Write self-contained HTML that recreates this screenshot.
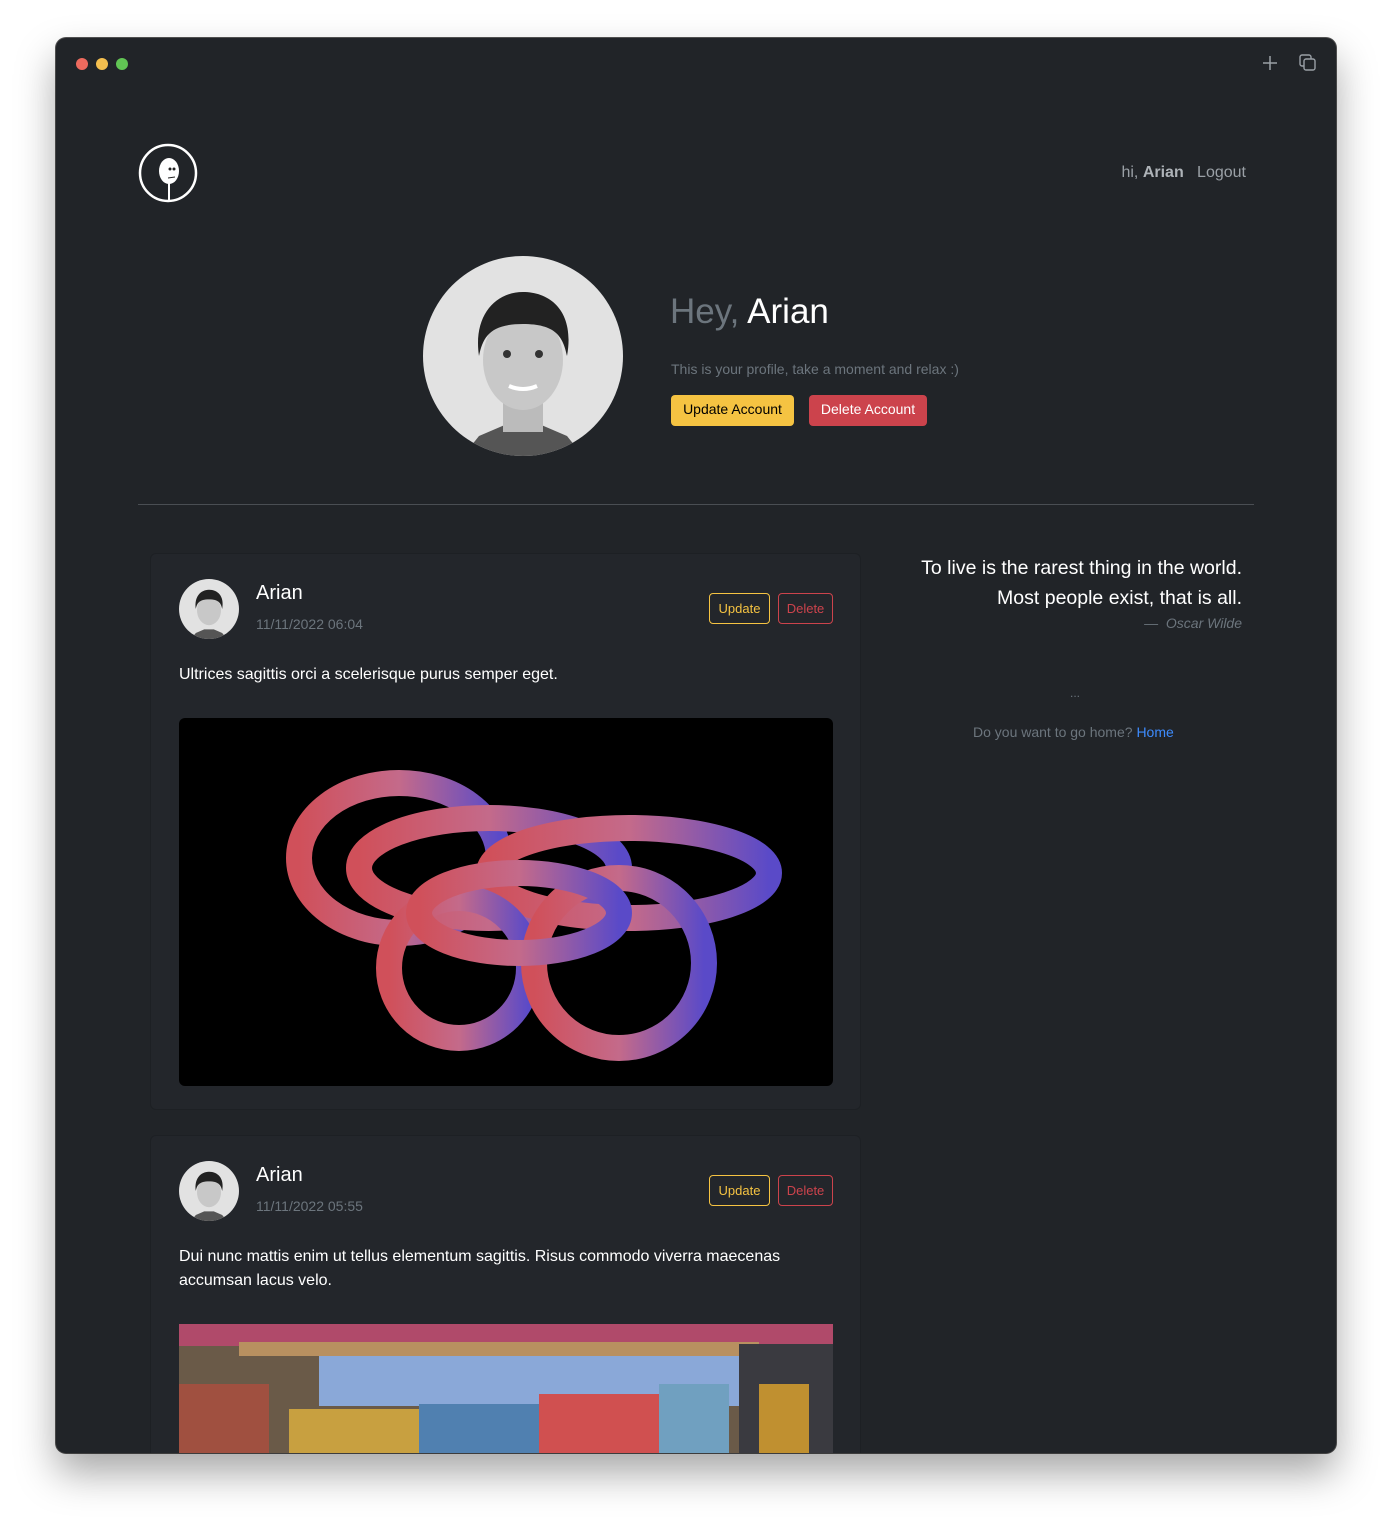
<!DOCTYPE html>
<html><head><meta charset="utf-8"><style>
*{box-sizing:border-box;margin:0;padding:0}
body{width:1392px;height:1527px;background:#fff;font-family:"Liberation Sans",sans-serif;position:relative;overflow:hidden}
.win{position:absolute;left:56px;top:38px;width:1280px;height:1415px;background:#212428;border-radius:10px;overflow:hidden;box-shadow:0 20px 40px rgba(0,0,0,.35),0 0 0 1px #555}
.dot{position:absolute;top:20px;width:12px;height:12px;border-radius:50%}
.abs{position:absolute}
.card{position:absolute;left:94px;width:711px;background:#23262b;border:1px solid #1d2024;border-radius:6px}
.btn{position:absolute;font-size:13px;border-radius:4px;text-align:center;line-height:29px;height:31px}
.name{position:absolute;left:105px;font-size:20px;color:#fff}
.date{position:absolute;left:105px;font-size:14px;color:#6c757d}
.txt{position:absolute;left:28px;font-size:16px;color:#fff;line-height:24px}
</style></head><body>
<div class="win">
<div class="dot" style="left:20px;background:#ec6a5e"></div>
<div class="dot" style="left:40px;background:#f4bf4f"></div>
<div class="dot" style="left:60px;background:#61c554"></div>
<svg class="abs" style="left:1206px;top:17px" width="16" height="16"><path d="M8 1v14M1 8h14" stroke="#9aa0a6" stroke-width="1.5"/></svg>
<svg class="abs" style="left:1243px;top:16px" width="18" height="18" fill="none" stroke="#9aa0a6" stroke-width="1.4"><rect x="1" y="1" width="11" height="11" rx="2"/><rect x="5" y="5" width="11" height="11" rx="2" fill="#212428"/></svg>
<svg class="abs" style="left:82px;top:105px" width="60" height="60"><circle cx="30" cy="30" r="28" fill="none" stroke="#fff" stroke-width="2.5"/><ellipse cx="31" cy="28" rx="10" ry="13" fill="#fff"/><rect x="30" y="40" width="2" height="18" fill="#fff"/><circle cx="32" cy="26" r="1.5" fill="#222"/><circle cx="36" cy="26" r="1.5" fill="#222"/><path d="M30 35l7-1" stroke="#222"/></svg>
<div class="abs" style="right:90px;top:126px;font-size:16px;color:#9aa0a6">hi, <b style="color:#aeb3b8">Arian</b>&nbsp;&nbsp;&nbsp;Logout</div>
<svg class="abs" style="left:367px;top:218px" width="200" height="200" viewBox="0 0 100 100"><defs><clipPath id="c"><circle cx="50" cy="50" r="50"/></clipPath></defs><g clip-path="url(#c)"><rect width="100" height="100" fill="#e2e2e2"/><path d="M20 100l8-10 14-6h16l14 6 8 10z" fill="#555"/><rect x="40" y="70" width="20" height="18" fill="#bbb"/><ellipse cx="50" cy="52" rx="20" ry="25" fill="#c8c8c8"/><path d="M28 50c-3-20 8-32 22-32s26 10 22 32c-2-10-6-16-22-16s-20 6-22 16z" fill="#222"/><circle cx="42" cy="49" r="2" fill="#333"/><circle cx="58" cy="49" r="2" fill="#333"/><path d="M43 65q7 3 14 0" stroke="#fff" stroke-width="2" fill="none"/></g></svg>
<div class="abs" style="left:614px;top:254px;font-size:35px;color:#6c757d">Hey, <span style="color:#fff">Arian</span></div>
<div class="abs" style="left:615px;top:323px;font-size:14px;color:#6c757d">This is your profile, take a moment and relax :)</div>
<div class="btn" style="left:615px;top:357px;width:123px;background:#f5c342;color:#000;font-size:14px">Update Account</div>
<div class="btn" style="left:753px;top:357px;width:118px;background:#cc434c;color:#fff;font-size:14px">Delete Account</div>
<div class="abs" style="left:82px;top:466px;width:1116px;height:1px;background:#4a4e53"></div>

<div class="card" style="top:515px;height:557px">
<svg class="abs" style="left:28px;top:25px" width="60" height="60" viewBox="0 0 100 100"><defs><clipPath id="c2"><circle cx="50" cy="50" r="50"/></clipPath></defs><g clip-path="url(#c2)"><rect width="100" height="100" fill="#e2e2e2"/><path d="M20 100l8-10 14-6h16l14 6 8 10z" fill="#555"/><ellipse cx="50" cy="52" rx="20" ry="25" fill="#c8c8c8"/><path d="M28 50c-3-20 8-32 22-32s26 10 22 32c-2-10-6-16-22-16s-20 6-22 16z" fill="#222"/></g></svg>
<div class="name" style="top:28px">Arian</div>
<div class="date" style="top:62px">11/11/2022 06:04</div>
<div class="btn" style="left:558px;top:39px;width:61px;border:1px solid #f5c342;color:#f5c342">Update</div>
<div class="btn" style="left:627px;top:39px;width:55px;border:1px solid #cc434c;color:#cc434c">Delete</div>
<div class="txt" style="top:109px">Ultrices sagittis orci a scelerisque purus semper eget.</div>
<svg class="abs" style="left:28px;top:164px;border-radius:6px" width="654" height="368"><defs><linearGradient id="g" x1="0" x2="1"><stop offset="0" stop-color="#d0505a"/><stop offset=".5" stop-color="#c46a8a"/><stop offset="1" stop-color="#5a4ac8"/></linearGradient></defs><rect width="654" height="368" fill="#000"/><g fill="none" stroke="url(#g)" stroke-width="26"><ellipse cx="220" cy="140" rx="100" ry="75"/><ellipse cx="310" cy="150" rx="130" ry="50"/><ellipse cx="450" cy="155" rx="140" ry="45"/><circle cx="280" cy="250" r="70"/><circle cx="440" cy="245" r="85"/><ellipse cx="340" cy="195" rx="100" ry="40"/></g></svg>
</div>

<div class="card" style="top:1097px;height:340px">
<svg class="abs" style="left:28px;top:25px" width="60" height="60" viewBox="0 0 100 100"><g clip-path="url(#c2)"><rect width="100" height="100" fill="#e2e2e2"/><path d="M20 100l8-10 14-6h16l14 6 8 10z" fill="#555"/><ellipse cx="50" cy="52" rx="20" ry="25" fill="#c8c8c8"/><path d="M28 50c-3-20 8-32 22-32s26 10 22 32c-2-10-6-16-22-16s-20 6-22 16z" fill="#222"/></g></svg>
<div class="name" style="top:28px">Arian</div>
<div class="date" style="top:62px">11/11/2022 05:55</div>
<div class="btn" style="left:558px;top:39px;width:61px;border:1px solid #f5c342;color:#f5c342">Update</div>
<div class="btn" style="left:627px;top:39px;width:55px;border:1px solid #cc434c;color:#cc434c">Delete</div>
<div class="txt" style="top:109px">Dui nunc mattis enim ut tellus elementum sagittis. Risus commodo viverra maecenas<br>accumsan lacus velo.</div>
<svg class="abs" style="left:28px;top:188px" width="654" height="140"><rect width="654" height="140" fill="#6a5a48"/><rect x="0" y="0" width="654" height="22" fill="#b04a6a"/><rect x="60" y="18" width="520" height="14" fill="#b89060"/><rect x="140" y="32" width="420" height="50" fill="#8aa8d8"/><rect x="560" y="20" width="94" height="120" fill="#3a3a40"/><rect x="0" y="60" width="90" height="80" fill="#a05040"/><rect x="110" y="85" width="130" height="55" fill="#c8a040"/><rect x="240" y="80" width="120" height="60" fill="#5080b0"/><rect x="360" y="70" width="120" height="70" fill="#d05050"/><rect x="480" y="60" width="70" height="80" fill="#70a0c0"/><rect x="580" y="60" width="50" height="80" fill="#c09030"/></svg>
</div>

<div class="abs" style="right:94px;top:515px;text-align:right;font-size:19.5px;color:#fff;line-height:30px">To live is the rarest thing in the world.<br>Most people exist, that is all.</div>
<div class="abs" style="right:94px;top:577px;font-size:14px;color:#6c757d;font-style:italic">—&nbsp; Oscar Wilde</div>
<div class="abs" style="left:1014px;top:648px;font-size:12px;color:#6c757d">...</div>
<div class="abs" style="left:917px;top:686px;font-size:14px;color:#6c757d">Do you want to go home? <span style="color:#3d8bfd">Home</span></div>
</div>
</body></html>
